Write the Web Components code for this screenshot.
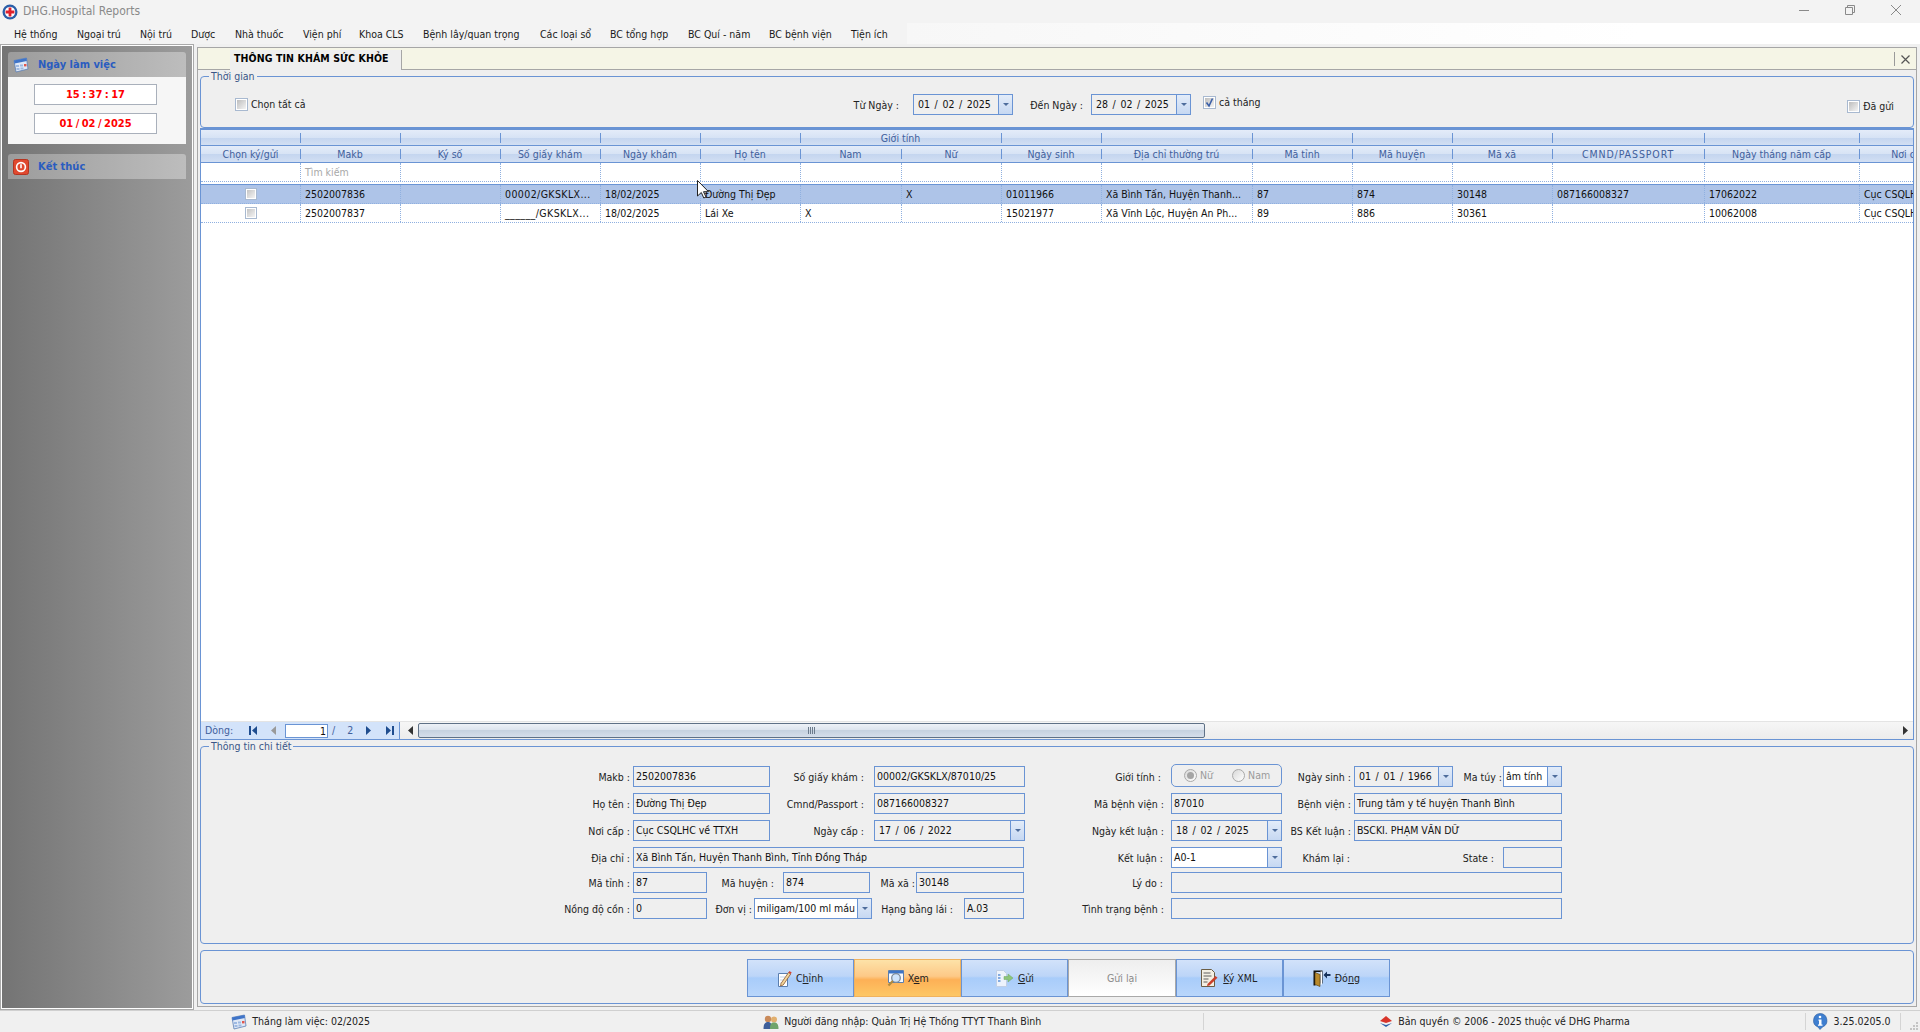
<!DOCTYPE html>
<html lang="vi">
<head>
<meta charset="utf-8">
<title>DHG.Hospital Reports</title>
<style>
  html, body { margin: 0; height: 100%; overflow: hidden; }
  body {
    position: relative;
    display: flex;
    flex-direction: column;
    width: 1920px;
    height: 1032px;
    background: #f0f0f0;
    color: #111;
    font: 10.5px/13px "DejaVu Sans Condensed", "Liberation Sans", Arial, sans-serif;
  }
  .content { display: flex; flex: none; height: 966px; }
  dhg-row + dhg-row { margin-top: 6px; }
</style>
</head>
<body>
<dhg-titlebar></dhg-titlebar>
<dhg-menubar></dhg-menubar>

<div class="content">
  <dhg-sidebar></dhg-sidebar>
  <dhg-main>
    <dhg-tabstrip slot="tabs">THÔNG TIN KHÁM SỨC KHỎE</dhg-tabstrip>

    <dhg-group slot="filter" legend="Thời gian" style="height:58px">
      <dhg-row style="margin-top:11px">
        <dhg-check w="100" style="margin-left:34px">Chọn tất cả</dhg-check>
        <dhg-field label="Từ Ngày :" lw="578" gap="14" w="100" date value="01 / 02 / 2025"></dhg-field>
        <dhg-field label="Đến Ngày :" lw="78" gap="8" w="100" date value="28 / 02 / 2025"></dhg-field>
        <dhg-check checked style="margin-left:12px;margin-top:-2px">cả tháng</dhg-check>
        <dhg-check style="margin-left:auto;margin-right:19px;margin-top:2px">Đã gửi</dhg-check>
      </dhg-row>
    </dhg-group>

    <dhg-grid slot="grid"></dhg-grid>

    <dhg-group slot="detail" legend="Thông tin chi tiết" style="height:204px">
      <dhg-row style="margin-top:13px">
        <dhg-field label="Makb :" lw="432" gap="3" w="137" value="2502007836"></dhg-field>
        <dhg-field label="Số giấy khám :" lw="104" gap="10" w="151" value="00002/GKSKLX/87010/25"></dhg-field>
        <dhg-field label="Giới tính :" lw="146" gap="10" w="0"></dhg-field>
        <dhg-radio></dhg-radio>
        <dhg-field label="Ngày sinh :" lw="72" gap="3" w="99" date value="01 / 01 / 1966"></dhg-field>
        <dhg-field label="Ma túy :" lw="50" gap="1" w="59" combo white value="âm tính"></dhg-field>
      </dhg-row>
      <dhg-row>
        <dhg-field label="Họ tên :" lw="432" gap="3" w="137" value="Đường Thị Đẹp"></dhg-field>
        <dhg-field label="Cmnd/Passport :" lw="104" gap="10" w="151" value="087166008327"></dhg-field>
        <dhg-field label="Mã bệnh viện :" lw="146" gap="7" w="111" value="87010"></dhg-field>
        <dhg-field label="Bệnh viện :" lw="72" gap="3" w="208" value="Trung tâm y tế huyện Thanh Bình"></dhg-field>
      </dhg-row>
      <dhg-row>
        <dhg-field label="Nơi cấp :" lw="432" gap="3" w="137" value="Cục CSQLHC về TTXH"></dhg-field>
        <dhg-field label="Ngày cấp :" lw="104" gap="10" w="151" date value="17 / 06 / 2022"></dhg-field>
        <dhg-field label="Ngày kết luận :" lw="146" gap="7" w="111" date value="18 / 02 / 2025"></dhg-field>
        <dhg-field label="BS Kết luận :" lw="72" gap="3" w="208" value="BSCKI. PHẠM VĂN DỮ"></dhg-field>
      </dhg-row>
      <dhg-row>
        <dhg-field label="Địa chỉ :" lw="432" gap="3" w="391" value="Xã Bình Tấn, Huyện Thanh Bình, Tỉnh Đồng Tháp"></dhg-field>
        <dhg-field label="Kết luận :" lw="147" gap="8" w="111" combo white value="A0-1"></dhg-field>
        <dhg-field label="Khám lại :" lw="72" gap="4" w="0"></dhg-field>
        <dhg-field label="State :" lw="149" gap="9" w="59"></dhg-field>
      </dhg-row>
      <dhg-row style="margin-top:4px">
        <dhg-field label="Mã tỉnh :" lw="432" gap="3" w="74" value="87"></dhg-field>
        <dhg-field label="Mã huyện :" lw="76" gap="9" w="87" value="874"></dhg-field>
        <dhg-field label="Mã xã :" lw="46" gap="1" w="108" value="30148"></dhg-field>
        <dhg-field label="Lý do :" lw="147" gap="8" w="391"></dhg-field>
      </dhg-row>
      <dhg-row style="margin-top:5px">
        <dhg-field label="Nồng độ cồn :" lw="432" gap="3" w="74" value="0"></dhg-field>
        <dhg-field label="Đơn vị :" lw="47" gap="2" w="118" combo white value="miligam/100 ml máu"></dhg-field>
        <dhg-field label="Hạng bằng lái :" lw="92" gap="11" w="60" value="A.03"></dhg-field>
        <dhg-field label="Tình trạng bệnh :" lw="147" gap="7" w="391"></dhg-field>
      </dhg-row>
    </dhg-group>

    <dhg-group slot="actions" style="height:54px">
      <dhg-row style="margin:8px 0 0 546px">
        <dhg-action icon="edit">C<u>h</u>ỉnh</dhg-action>
        <dhg-action icon="view" hot>X<u>e</u>m</dhg-action>
        <dhg-action icon="send"><u>G</u>ửi</dhg-action>
        <dhg-action off>Gửi lại</dhg-action>
        <dhg-action icon="sign"><u>K</u>ý XML</dhg-action>
        <dhg-action icon="exit">Đó<u>n</u>g</dhg-action>
      </dhg-row>
    </dhg-group>
  </dhg-main>
</div>

<dhg-statusbar></dhg-statusbar>
<dhg-cursor></dhg-cursor>

<script>
  const CAL_ICON = `<svg width="16" height="16" viewBox="0 0 16 16">
    <path d="M1 3.5 13.5 1 15 12 3 15z" fill="#dfe8f6" stroke="#5b7fb5" stroke-width=".8"/>
    <path d="M1 3.5 13.5 1 13.9 4 1.5 6.6z" fill="#3f74c8"/>
    <path d="M3 8h3v2H3zM7 7.5h3v2H7zM3.5 11h3v2h-3zM7.5 10.5h3v2h-3z" fill="#9db9e2"/>
    <path d="M11 7h2.5v2.4H11z" fill="#e2574c"/></svg>`;

  // small helper, every element gets the same open shadow setup
  function define(name, css, render) {
    customElements.define(name, class extends HTMLElement {
      connectedCallback() {
        if (this.shadowRoot) return;
        this.attachShadow({ mode: "open" }).innerHTML = `<style>${css}</style>` + render(this);
      }
    });
  }

  define("dhg-titlebar", `
    :host { display: flex; flex: none; align-items: center; height: 23px; background: #f3f3f3; }
    .title { margin-left: 5px; color: #8a8a8a; font-size: 12px; }
    .logo { margin-left: 2px; }
    .ctl { display: flex; margin: 0 19px 3px auto; gap: 36px; align-items: center; }
    svg { display: block; }
  `, () => `
    <svg class="logo" width="16" height="16" viewBox="0 0 16 16">
      <circle cx="8" cy="8" r="7.5" fill="#2a5ea8"/><circle cx="8" cy="8" r="5.2" fill="#fff"/>
      <path d="M6.6 3.6h2.8v3h3v2.8h-3v3H6.6v-3h-3V6.6h3z" fill="#e0202c"/>
    </svg>
    <span class="title">DHG.Hospital Reports</span>
    <div class="ctl">
      <svg width="10" height="10" viewBox="0 0 10 10"><path d="M0 5.5h10" stroke="#8a8a8a"/></svg>
      <svg width="10" height="10" viewBox="0 0 10 10" fill="none" stroke="#8a8a8a"><path d="M.5 2.5h7v7h-7zM2.5 2.5v-2h7v7h-2"/></svg>
      <svg width="10" height="10" viewBox="0 0 10 10"><path d="M0 0l10 10M10 0 0 10" stroke="#8a8a8a"/></svg>
    </div>
  `);

  // widths come from where each item starts in the real menu
  const MENU = [["Hệ thống", 63], ["Ngoại trú", 63], ["Nội trú", 51], ["Dược", 44], ["Nhà thuốc", 68], ["Viện phí", 56],
    ["Khoa CLS", 64], ["Bệnh lây/quan trọng", 117], ["Các loại sổ", 70], ["BC tổng hợp", 78], ["BC Quí - năm", 81],
    ["BC bệnh viện", 82], ["Tiện ích", 40]];

  define("dhg-menubar", `
    :host {
      display: flex; flex: none; align-items: center; height: 21px; padding-left: 14px;
      background: linear-gradient(90deg, #f3f3f3 0 907px, #f7f7f7 907px, #fff 1640px);
      color: #1a1a1a;
    }
    span { flex: none; white-space: nowrap; padding-top: 1px; }
  `, () => MENU.map(([m, w]) => `<span style="width:${w}px">${m}</span>`).join(""));

  define("dhg-sidebar", `
    :host {
      display: block; flex: none; box-sizing: border-box; width: 194px; height: 966px;
      border: 2px solid #fff; border-bottom-width: 2px; outline: 1px solid #aaa; outline-offset: -1px;
      padding: 6px;
      background: linear-gradient(90deg, #747474, #9c9c9c);
    }
    .head {
      display: flex; align-items: center; gap: 9px; height: 25px; padding-left: 5px;
      border-radius: 3px 3px 0 0;
      background: linear-gradient(90deg, #9c9c9c, #bdbdbd);
      color: #2a5cc0; font-weight: bold; font-size: 11px;
    }
    .body {
      display: flex; flex-direction: column; gap: 8px; box-sizing: border-box;
      height: 67px; padding: 7px 3px 0 0; align-items: center; background: #f6f6f6; margin-bottom: 10px;
    }
    .clock {
      box-sizing: border-box; width: 123px; height: 21px; border: 1px solid #a9b0bb; background: #fff;
      color: #f00; font-weight: bold; line-height: 19px; text-align: center; font-size: 11px; word-spacing: -1px;
    }
  `, () => `
    <div class="head">${CAL_ICON}<span>Ngày làm việc</span></div>
    <div class="body">
      <div class="clock">15 : 37 : 17</div>
      <div class="clock">01 / 02 / 2025</div>
    </div>
    <div class="head">
      <svg width="16" height="16" viewBox="0 0 16 16">
        <rect x=".5" y=".5" width="15" height="15" rx="2" fill="#e0492f" stroke="#b53420"/>
        <circle cx="8" cy="8" r="4.4" fill="none" stroke="#fff" stroke-width="1.6"/>
        <path d="M8 5.2v4" stroke="#fff" stroke-width="1.6"/>
      </svg>
      <span>Kết thúc</span>
    </div>
  `);

  define("dhg-main", `
    :host {
      display: flex; flex-direction: column; box-sizing: border-box; width: 1720px; height: 960px;
      margin: 3px 0 0 3px; border: 1px solid #a6a6a6; padding: 0 2px 2px 0; background: #efefef;
    }
    .tabs { flex: none; margin-right: -2px; }
    .pad { display: flex; flex: 1; flex-direction: column; min-height: 0; padding-left: 2px; }
    .grid { display: flex; flex: 1; min-height: 0; }
    .grid ::slotted(*) { flex: 1; min-width: 0; }
    .actions { margin-top: 6px; }
  `, () => `
    <div class="tabs"><slot name="tabs"></slot></div>
    <div class="pad">
      <slot name="filter"></slot>
      <div class="grid"><slot name="grid"></slot></div>
      <slot name="detail"></slot>
      <div class="actions"><slot name="actions"></slot></div>
    </div>
  `);

  define("dhg-tabstrip", `
    :host {
      display: flex; align-items: flex-end; box-sizing: border-box; height: 22px;
      border-bottom: 1px solid #a6a6a6; background: #f5f5e6;
    }
    .tab {
      box-sizing: border-box; width: 172px; height: 20px; margin: 0 0 -1px 32px; padding: 2px 0 0 4px;
      border-right: 1px solid #a6a6a6; background: #efefef; color: #000; font-weight: bold; white-space: nowrap;
      letter-spacing: .1px;
    }
    .close {
      display: flex; align-items: center; justify-content: center; box-sizing: border-box;
      width: 21px; height: 14px; margin: 0 1px 3px auto; border-left: 1px solid #9a9a9a;
    }
  `, () => `
    <div class="tab"><slot></slot></div>
    <div class="close"><svg width="9" height="9" viewBox="0 0 9 9"><path d="M.5.5l8 8M8.5.5l-8 8" stroke="#555" stroke-width="1.2"/></svg></div>
  `);

  define("dhg-group", `
    :host { display: block; flex: none; box-sizing: border-box; }
    fieldset {
      box-sizing: border-box; height: 100%; margin: 0; padding: 0;
      border: 1px solid #6a94d4; border-radius: 4px; min-width: 0;
    }
    legend { margin-left: 8px; padding: 0 2px; color: #3a5688; line-height: 13px; }
    legend:empty { display: none; }
  `, (el) => `<fieldset><legend>${el.getAttribute("legend") || ""}</legend><slot></slot></fieldset>`);

  define("dhg-row", `:host { display: flex; align-items: flex-start; }`, () => `<slot></slot>`);

  define("dhg-check", `
    :host { display: flex; flex: none; align-items: center; gap: 3px; height: 21px; color: #222; }
    .box {
      position: relative; box-sizing: border-box; width: 13px; height: 13px; padding: 1px;
      border: 1px solid #a8b9d0; background: #fff;
    }
    .box i { display: block; width: 100%; height: 100%; background: linear-gradient(135deg, #bdbdbd, #f4f4f4); }
    svg { position: absolute; left: 0; top: 0; }
  `, (el) => {
    const w = el.getAttribute("w");
    if (w) el.style.width = w + "px";
    const tick = el.hasAttribute("checked")
      ? `<svg width="11" height="11" viewBox="0 0 11 11"><path d="M2.5 5.5 5 9l3.5-7.5" fill="none" stroke="#3a5fa8" stroke-width="1.6"/></svg>` : "";
    return `<div class="box"><i></i>${tick}</div><slot></slot>`;
  });

  define("dhg-field", `
    :host { display: flex; flex: none; height: 21px; }
    label { display: block; box-sizing: border-box; flex: none; text-align: right; line-height: 22px; color: #222; white-space: nowrap; }
    .box {
      display: flex; flex: none; box-sizing: border-box; height: 21px; border: 1px solid #6a94d4;
      background: #efefef; overflow: hidden;
    }
    .box.white { background: #fff; }
    .val { flex: 1; min-width: 0; padding: 0 1px 0 2px; line-height: 18px; white-space: nowrap; color: #111; overflow: hidden; }
    .val.date { padding-left: 4px; line-height: 19px; word-spacing: 1.6px; }
    .btn {
      display: flex; flex: none; align-items: center; justify-content: center; width: 13px;
      border-left: 1px solid #6a94d4; background: linear-gradient(#e3ecf9, #c6d8f2);
    }
    .btn i { width: 0; height: 0; border: 3px solid transparent; border-top: 3px solid #4e6d9c; border-bottom: 0; }
  `, (el) => {
    const w = +el.getAttribute("w");
    const isDate = el.hasAttribute("date");
    const hasBtn = isDate || el.hasAttribute("combo");
    const label = `<label style="width:${el.getAttribute("lw")}px;padding-right:${el.getAttribute("gap")}px">${el.getAttribute("label")}</label>`;
    if (!w) return label;
    return label + `<div class="box ${el.hasAttribute("white") ? "white" : ""}" style="width:${w}px">
      <div class="val ${isDate ? "date" : ""}">${el.getAttribute("value") || ""}</div>
      ${hasBtn ? `<div class="btn"><i></i></div>` : ""}
    </div>`;
  });

  define("dhg-radio", `
    :host {
      display: flex; flex: none; align-items: center; box-sizing: border-box; width: 111px; height: 23px;
      margin-top: -2px; padding-left: 12px; border: 1px solid #6a94d4; border-radius: 5px; color: #9a9a9a;
    }
    .dot { box-sizing: border-box; width: 13px; height: 13px; border: 1px solid #a9a9a9; border-radius: 50%; background: linear-gradient(135deg, #d8d8d8, #fff); display: flex; align-items: center; justify-content: center; margin-right: 3px; }
    .dot i { width: 7px; height: 7px; border-radius: 50%; background: #a5a5a5; }
    .gap { width: 19px; }
  `, () => `<div class="dot"><i></i></div><span>Nữ</span><div class="gap"></div><div class="dot"></div><span>Nam</span>`);

  const COLS = [99, 100, 100, 100, 100, 100, 101, 100, 100, 151, 100, 100, 100, 152, 155, 100];
  const HEADS = ["Chọn ký/gửi", "Makb", "Ký số", "Số giấy khám", "Ngày khám", "Họ tên", "Nam", "Nữ", "Ngày sinh",
    "Địa chỉ thường trú", "Mã tỉnh", "Mã huyện", "Mã xã", "CMND/PASSPORT", "Ngày tháng năm cấp", "Nơi cấp"];
  const ROWS = [
    ["", "2502007836", "", "00002/GKSKLX...", "18/02/2025", "Đường Thị Đẹp", "", "X", "01011966",
      "Xã Bình Tấn, Huyện Thanh...", "87", "874", "30148", "087166008327", "17062022", "Cục CSQLHC về TTXH"],
    ["", "2502007837", "", "______/GKSKLX...", "18/02/2025", "Lái Xe", "X", "", "15021977",
      "Xã Vĩnh Lộc, Huyện An Ph...", "89", "886", "30361", "", "10062008", "Cục CSQLHC về TTXH"],
  ];

  define("dhg-grid", `
    :host { display: flex; flex-direction: column; background: #fff; border-right: 1px solid #6a94d4; border-left: 1px solid #6a94d4; box-sizing: border-box; overflow: hidden; }
    .line { display: grid; flex: none; grid-template-columns: ${COLS.map((c) => c + "px").join(" ")}; width: max-content; }
    .band {
      height: 16px; border-top: 1px solid #6a94d4;
      background: linear-gradient(#e4ecf9, #d7e3f5 50%, #c4d5ef 51%, #d2dff3);
    }
    .band.top { border-top-width: 2px; height: 15px; }
    .band span {
      box-sizing: border-box; padding-top: 2px; text-align: center; color: #41609c; white-space: nowrap;
      background: linear-gradient(#6a94d4, #6a94d4) left center / 1px 10px no-repeat;
    }
    .band span:first-child { background: none; }
    .band span.caps { letter-spacing: .9px; }
    .g { grid-column: span 2; }
    .rule { flex: none; height: 1px; background: #6a94d4; }
    .filter { height: 18px; border-bottom: 1px dotted #8fb0e0; margin-bottom: 2px; }
    .row { height: 18px; border-bottom: 1px dotted #8fb0e0; }
    .row.sel { background: #aec4e8; }
    .cell {
      box-sizing: border-box; padding: 0 0 0 4px; line-height: 18px; white-space: nowrap; overflow: hidden;
      border-left: 1px dotted #8fb0e0; color: #111;
    }
    .cell:first-child { border-left: 0; padding: 0; display: flex; align-items: center; justify-content: center; }
    .cell.caps { letter-spacing: .4px; }
    .hint { color: #a8a8a8; }
    .cb { box-sizing: border-box; width: 12px; height: 12px; padding: 1px; border: 1px solid #a8b9d0; background: #fff; }
    .cb i { display: block; width: 100%; height: 100%; background: linear-gradient(135deg, #c4c4c4, #f4f4f4); }
    .fill { flex: 1; min-height: 0; }
    .foot { display: flex; flex: none; height: 17px; border-top: 1px solid #e4e4e4; border-bottom: 1px solid #6a94d4; }
    .pager {
      display: flex; flex: none; align-items: center; box-sizing: border-box; width: 199px;
      border-right: 1px solid #6a94d4; padding-left: 4px; color: #41609c; background: #d3e3fa;
      background-image: radial-gradient(#f3f7fe 30%, transparent 31%); background-size: 2px 2px;
    }
    .pager svg { display: block; flex: none; }
    .num { box-sizing: border-box; width: 43px; height: 14px; margin: 0 4px 0 8px; border: 1px solid #6a94d4; background: #fff; text-align: right; line-height: 13px; padding-right: 1px; color: #111; }
    .scroll { display: flex; flex: 1; align-items: center; background: linear-gradient(#f6f6f6, #ececec); }
    .thumb {
      display: flex; align-items: center; justify-content: center; box-sizing: border-box; width: 787px; height: 15px;
      margin-left: 4px; border: 1px solid #5f7187; border-radius: 2px;
      background: linear-gradient(#eef2f7, #dde4ee 45%, #c6d2e0 50%, #d5deea);
    }
    .grip { width: 7px; height: 7px; background: repeating-linear-gradient(90deg, #6c7b8c 0 1px, transparent 1px 2px); }
    .arrow { margin-left: auto; margin-right: 4px; }
  `, () => {
    const groupCells = COLS.map((c, i) => i === 6 ? `<span class="g">Giới tính</span>` : i === 7 ? "" : `<span></span>`).join("");
    const filterCells = COLS.map((c, i) => `<div class="cell ${i === 1 ? "hint" : ""}">${i === 1 ? "Tìm kiếm" : ""}</div>`).join("");
    const bodyRows = ROWS.map((r, ri) => `<div class="line row ${ri === 0 ? "sel" : ""}">` + r.map((v, i) =>
      i === 0 ? `<div class="cell"><div class="cb"><i></i></div></div>` : `<div class="cell ${i === 3 ? "caps" : ""}">${v}</div>`).join("") + `</div>`).join("");
    const ic = (d, w = 10) => `<svg width="${w}" height="9" viewBox="0 0 ${w} 9"><path d="${d}" fill="#1f4d8f"/></svg>`;
    return `
      <div class="line band top">${groupCells}</div>
      <div class="line band">${HEADS.map((h, i) => `<span class="${i === 13 ? "caps" : ""}">${h}</span>`).join("")}</div>
      <div class="rule"></div>
      <div class="line filter">${filterCells}</div>
      <div class="rule"></div>
      ${bodyRows}
      <div class="fill"></div>
      <div class="foot">
        <div class="pager">
          <span style="width:44px">Dòng:</span>
          ${ic("M0 0h2v9H0zM8 0v9L3 4.5z", 8)}
          <span style="width:14px"></span>
          <svg width="6" height="9" viewBox="0 0 6 9"><path d="M5 0v9L0 4.5z" fill="#9a9a9a"/></svg>
          <div class="num">1</div>
          <span>/</span>
          <span style="width:12px"></span>
          <span>2</span>
          <span style="width:13px"></span>
          <svg width="6" height="9" viewBox="0 0 6 9"><path d="M0 0v9l5-4.500z" fill="#1f4d8f"/></svg>
          <span style="width:14px"></span>
          ${ic("M0 0v9l5-4.500zM6 0h2v9H6z", 8)}
        </div>
        <div class="scroll">
          <svg style="margin-left:8px" width="6" height="9" viewBox="0 0 6 9"><path d="M5 0v9L0 4.5z" fill="#333"/></svg>
          <div class="thumb"><div class="grip"></div></div>
          <svg class="arrow" width="6" height="9" viewBox="0 0 6 9"><path d="M0 0v9l5-4.500z" fill="#333"/></svg>
        </div>
      </div>`;
  });

  const ACTION_ICONS = {
    edit: `<svg width="14" height="17" viewBox="0 0 14 17"><path d="M.5 3.500h9v13h-9z" fill="#fff" stroke="#5a7fb0"/><path d="M2 7h5M2 10h4M2 13h5" stroke="#c5d3e6"/><path d="M3 13.500 10.500 2.500l2.200 1.500-7.500 11-2.700 1z" fill="#f3d59a" stroke="#8a5a35" stroke-width=".8"/><path d="M10.500 2.500l2.200 1.500 1-1.500-2.200-1.600z" fill="#d6402e"/></svg>`,
    view: `<svg width="17" height="17" viewBox="0 0 17 17"><path d="M1.500.5h15v12h-15z" fill="#f6f9fe" stroke="#5a7fb0"/><path d="M2 1h14v2.500H2z" fill="#3d74c6"/><circle cx="9" cy="8" r="4.300" fill="#cfe4fb" stroke="#7d8a98" stroke-width="1.300"/><path d="M5.800 11 1.500 15.500" stroke="#b08a3e" stroke-width="2.200"/></svg>`,
    send: `<svg width="18" height="17" viewBox="0 0 18 17"><path d="M.5.5h7l3 3V16.500H.5z" fill="#edf3fc" stroke="#c0cfe6"/><path d="M2 5h2.500M2 8h2.500M2 11h2.500" stroke="#5f93d8" stroke-width="1.500"/><path d="M8 6.500h4V4l5 4-5 4V9.500H8z" fill="#8cc57a" stroke="#72a862" stroke-width=".5"/></svg>`,
    sign: `<svg width="18" height="18" viewBox="0 0 18 18"><path d="M.5.5h10l3 3v14H.5z" fill="#f3efe3" stroke="#6b5d45"/><path d="M2.500 4h7M2.500 7h8M2.500 10h5M2.500 13h4" stroke="#5f5f5f"/><path d="M6.500 15 14.500 7l2 1.800-8 7.700-2.500.6z" fill="#c8402c"/></svg>`,
    exit: `<svg width="18" height="17" viewBox="0 0 18 17"><path d="M.5.5h9v13h-2V2h-5v13.500H.5z" fill="#111"/><path d="M2 1.500h5.500v13h1.500V1.500H2z" fill="#fff"/><path d="M2 2.500 7 4.500v12L2 14.500z" fill="#b98a2c" stroke="#4d3a10" stroke-width=".6"/><path d="M17.500 4H14V1.500L10.500 5 14 8.500V6h3.500z" fill="#16325c"/></svg>`,
  };

  define("dhg-action", `
    :host {
      display: flex; flex: none; align-items: center; justify-content: center; gap: 4px; box-sizing: border-box;
      width: 107.170px; height: 38px; border: 1px solid #6a94d4; color: #222;
      background: linear-gradient(#d2e2fa, #bcd5f8 45%, #a8ccfa 50%, #b9d6fb);
    }
    :host([hot]) {
      border-color: #f0b25e;
      background: linear-gradient(#fde2a8, #fdc987 45%, #fdb056 55%, #fdc765);
    }
    :host([off]) { border: 1px solid #a9a9a9; color: #8a8a8a; background: linear-gradient(#eeeeee, #ffffff); }
    svg { display: block; }
  `, (el) => `${ACTION_ICONS[el.getAttribute("icon")] || ""}<span><slot></slot></span>`);

  define("dhg-statusbar", `
    :host { display: flex; flex: none; box-sizing: border-box; height: 22px; border-top: 1px solid #d0d0d0; background: #f0f0f0; color: #222; }
    .p { display: flex; flex: none; align-items: center; justify-content: center; gap: 5px; box-sizing: border-box; width: 601.500px; white-space: nowrap; }
    .sep { flex: none; width: 1px; margin: 2px 0; background: #d4d4d4; }
    .grip { flex: 1; align-self: flex-end; text-align: right; padding-bottom: 2px; }
    svg { display: block; flex: none; }
  `, () => `
    <div class="p">${CAL_ICON}<span>Tháng làm việc: 02/2025</span></div>
    <div class="p">
      <svg width="16" height="16" viewBox="0 0 16 16">
        <circle cx="5" cy="5" r="3.200" fill="#c98a5a"/><path d="M.5 15c0-5 1.500-7 4.500-7s4 2 4 7z" fill="#3e5f9a"/>
        <circle cx="11" cy="5.500" r="3" fill="#e2b06f"/><path d="M7 15c0-5 1-6.500 4-6.500s4.500 1.500 4.500 6.500z" fill="#6fa46a"/>
      </svg>
      <span>Người đăng nhập: Quản Trị Hệ Thống TTYT Thanh Bình</span>
    </div>
    <div class="sep"></div>
    <div class="p" style="width:601px">
      <svg width="14" height="14" viewBox="0 0 14 14"><path d="M7 1 13 6 7 8 1 6z" fill="#d8342a"/><path d="M1 8l6 2 6-2-6 4z" fill="#2a5ea8"/></svg>
      <span>Bản quyền © 2006 - 2025 thuộc về DHG Pharma</span>
    </div>
    <div class="sep"></div>
    <div class="p" style="width:94px;padding-right:3px">
      <svg width="16" height="17" viewBox="0 0 16 17">
        <path d="M8 .5a7 7 0 0 1 2.500 13.500L8 16.500 6 14A7 7 0 0 1 8 .5z" fill="#3f7fd0" stroke="#2c5c9e" stroke-width=".6"/>
        <circle cx="8" cy="4" r="1.300" fill="#fff"/><path d="M6.500 6.500h3v5h1v1.200h-4.500v-1.200h1v-3.800h-.5z" fill="#fff"/>
      </svg>
      <span>3.25.0205.0</span>
    </div>
    <div class="sep"></div>
    <div class="grip">
      <svg style="margin-left:auto;margin-right:2px" width="8" height="8" viewBox="0 0 8 8"><path d="M6 0h2v2H6zM3 3h2v2H3zM6 3h2v2H6zM0 6h2v2H0zM3 6h2v2H3zM6 6h2v2H6z" fill="#c4c4c4"/></svg>
    </div>
  `);

  define("dhg-cursor", `
    :host { position: absolute; left: 697px; top: 180px; width: 12px; height: 19px; pointer-events: none; }
    svg { display: block; }
  `, () => `<svg width="12" height="19" viewBox="0 0 12 19"><path d="M.5.500V16l3.800-3.500 2.500 5.500 2.200-1-2.500-5.300h5z" fill="#fff" stroke="#222" stroke-width="1"/></svg>`);
</script>
</body>
</html>
